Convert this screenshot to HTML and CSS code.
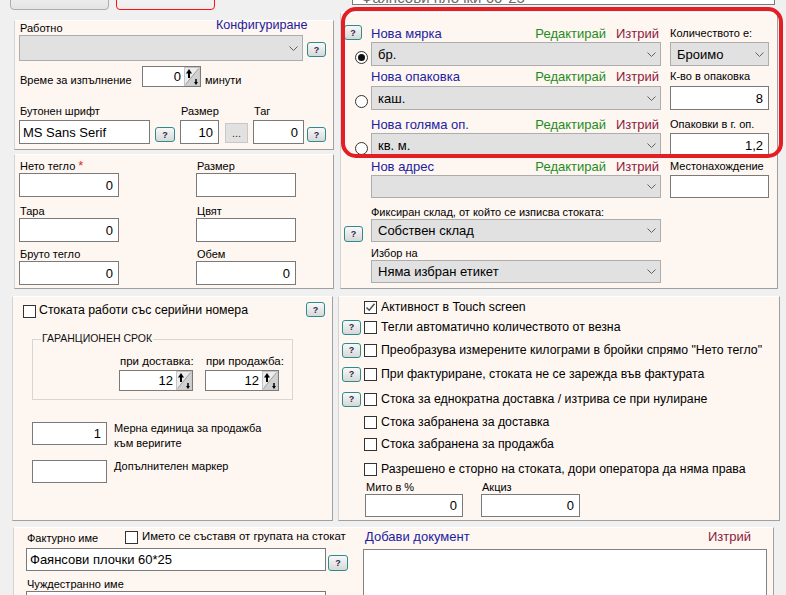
FILE: index.html
```html
<!DOCTYPE html>
<html>
<head>
<meta charset="utf-8">
<link rel="stylesheet" href="styles.css">
</head>
<body>
<div class="page">
  <div class="cols">
    <div class="colL">
      <div class="tabs"><div class="tab"></div><div class="tab tab-red"></div></div>

      <div class="panel p1">
        <div class="p1-r1"><span class="lbl lw197">Работно</span><span class="cfg">Конфигуриране</span></div>
        <div class="p1-r2"><div class="select w284"><span></span><svg class="chev" width="9" height="5" viewBox="0 0 9 5"><path d="M0.5 0.5 L4.5 4.5 L8.5 0.5" fill="none" stroke="#606060"/></svg></div><div class="qbtn">?</div></div>
        <div class="p1-r3">
          <span class="l12 lw123">Време за изпълнение</span>
          <div class="spin w59"><span class="val">0</span><svg width="16" height="19" viewBox="0 0 16 19"><rect x="0.5" y="0.5" width="15" height="18" fill="#ececec" stroke="#c4c4c4"/><path d="M15.5 1 L15.5 18.5 L1 18.5 Z" fill="#d0d0d0"/><path d="M1.5 17.5 L14.5 1.5" stroke="#9a9a9a"/><path d="M5 11 V4" stroke="#000" stroke-width="2"/><path d="M2 6.5 L5 2 L8 6.5 Z" fill="#000"/><path d="M12 12 V16" stroke="#000" stroke-width="1.5"/><path d="M10 15 L12 18 L14 15 Z" fill="#000"/></svg></div>
          <span class="l12 ml4">минути</span>
        </div>
        <div class="p1-r4">
          <div class="field"><span class="lbl">Бутонен шрифт</span><div class="input left w131 fs13">MS Sans Serif</div></div>
          <div class="qbtn q20 ml5 mb2">?</div>
          <div class="field ml5"><span class="lbl">Размер</span><div class="input w39">10</div></div>
          <div class="dots">...</div>
          <div class="field ml5"><span class="lbl">Таг</span><div class="input w51">0</div></div>
          <div class="qbtn ml3 mb2">?</div>
        </div>
      </div>

      <div class="panel p2">
        <div class="p2-row">
          <div class="field w100"><span class="lbl">Нето тегло <span class="req">*</span></span><div class="input">0</div></div>
          <div class="field w100 col2"><span class="lbl">Размер</span><div class="input"></div></div>
        </div>
        <div class="p2-row mt8">
          <div class="field w100"><span class="lbl">Тара</span><div class="input">0</div></div>
          <div class="field w100 col2"><span class="lbl">Цвят</span><div class="input"></div></div>
        </div>
        <div class="p2-row mt6">
          <div class="field w100"><span class="lbl">Бруто тегло</span><div class="input">0</div></div>
          <div class="field w100 col2"><span class="lbl">Обем</span><div class="input">0</div></div>
        </div>
      </div>

      <div class="panel p3">
        <div class="p3-r1">
          <div class="cb ml10 mt3"></div>
          <span class="t125 ml3">Стоката работи със серийни номера</span>
          <div class="qbtn push">?</div>
        </div>
        <div class="group">
          <span class="legend">ГАРАНЦИОНЕН СРОК</span>
          <div class="g-row">
            <div class="field w74 gf1"><span class="lbl l115">при доставка:</span><div class="spin h21"><span class="val">12</span><svg width="16" height="19" viewBox="0 0 16 19"><rect x="0.5" y="0.5" width="15" height="18" fill="#ececec" stroke="#c4c4c4"/><path d="M15.5 1 L15.5 18.5 L1 18.5 Z" fill="#d0d0d0"/><path d="M1.5 17.5 L14.5 1.5" stroke="#9a9a9a"/><path d="M5 11 V4" stroke="#000" stroke-width="2"/><path d="M2 6.5 L5 2 L8 6.5 Z" fill="#000"/><path d="M12 12 V16" stroke="#000" stroke-width="1.5"/><path d="M10 15 L12 18 L14 15 Z" fill="#000"/></svg></div></div>
            <div class="field w74 ml12"><span class="lbl l115">при продажба:</span><div class="spin h21"><span class="val">12</span><svg width="16" height="19" viewBox="0 0 16 19"><rect x="0.5" y="0.5" width="15" height="18" fill="#ececec" stroke="#c4c4c4"/><path d="M15.5 1 L15.5 18.5 L1 18.5 Z" fill="#d0d0d0"/><path d="M1.5 17.5 L14.5 1.5" stroke="#9a9a9a"/><path d="M5 11 V4" stroke="#000" stroke-width="2"/><path d="M2 6.5 L5 2 L8 6.5 Z" fill="#000"/><path d="M12 12 V16" stroke="#000" stroke-width="1.5"/><path d="M10 15 L12 18 L14 15 Z" fill="#000"/></svg></div></div>
          </div>
        </div>
        <div class="p3-row mt22">
          <div class="input w75 h23">1</div>
          <span class="side-lbl">Мерна единица за продажба<br>към веригите</span>
        </div>
        <div class="p3-row mt15">
          <div class="input w75 h23"></div>
          <span class="side-lbl">Допълнителен маркер</span>
        </div>
      </div>
    </div>

    <div class="colR">
      <div class="topinput">Фаянсови плочки 60*25</div>

      <div class="panel rp1">
        <div class="ub">
          <div class="ua between"><div class="qbtn q18 qa">?</div><div class="radio on"></div></div>
          <div class="ubb">
            <div class="ul h15"><span class="blue">Нова мярка</span><span class="green">Редактирай</span><span class="red">Изтрий</span></div>
            <div class="select h24"><span>бр.</span><svg width="9" height="5" viewBox="0 0 9 5"><path d="M0.5 0.5 L4.5 4.5 L8.5 0.5" fill="none" stroke="#606060"/></svg></div>
          </div>
          <div class="uc">
            <div class="ul h15"><span class="sl">Количеството е:</span></div>
            <div class="select h24"><span>Броимо</span><svg width="9" height="5" viewBox="0 0 9 5"><path d="M0.5 0.5 L4.5 4.5 L8.5 0.5" fill="none" stroke="#606060"/></svg></div>
          </div>
        </div>
        <div class="ub">
          <div class="ua end"><div class="radio"></div></div>
          <div class="ubb">
            <div class="ul h20"><span class="blue">Нова опаковка</span><span class="green">Редактирай</span><span class="red">Изтрий</span></div>
            <div class="select h24"><span>каш.</span><svg width="9" height="5" viewBox="0 0 9 5"><path d="M0.5 0.5 L4.5 4.5 L8.5 0.5" fill="none" stroke="#606060"/></svg></div>
          </div>
          <div class="uc">
            <div class="ul h20"><span class="sl">К-во в опаковка</span></div>
            <div class="input h24">8</div>
          </div>
        </div>
        <div class="ub">
          <div class="ua end"><div class="radio"></div></div>
          <div class="ubb">
            <div class="ul h23"><span class="blue">Нова голяма оп.</span><span class="green">Редактирай</span><span class="red">Изтрий</span></div>
            <div class="select h24"><span>кв. м.</span><svg width="9" height="5" viewBox="0 0 9 5"><path d="M0.5 0.5 L4.5 4.5 L8.5 0.5" fill="none" stroke="#606060"/></svg></div>
          </div>
          <div class="uc">
            <div class="ul h23"><span class="sl">Опаковки в г. оп.</span></div>
            <div class="input h24">1,2</div>
          </div>
        </div>
        <div class="ub">
          <div class="ua"></div>
          <div class="ubb">
            <div class="ul h18"><span class="blue">Нов адрес</span><span class="green">Редактирай</span><span class="red">Изтрий</span></div>
            <div class="select h23"><span></span><svg width="9" height="5" viewBox="0 0 9 5"><path d="M0.5 0.5 L4.5 4.5 L8.5 0.5" fill="none" stroke="#606060"/></svg></div>
          </div>
          <div class="uc">
            <div class="ul h18"><span class="sl">Местонахождение</span></div>
            <div class="input h23"></div>
          </div>
        </div>
        <div class="ub">
          <div class="ua end"><div class="qbtn q16 qa">?</div></div>
          <div class="ubb">
            <div class="ul h21"><span class="sl">Фиксиран склад, от който се изписва стоката:</span></div>
            <div class="select h23"><span>Собствен склад</span><svg width="9" height="5" viewBox="0 0 9 5"><path d="M0.5 0.5 L4.5 4.5 L8.5 0.5" fill="none" stroke="#606060"/></svg></div>
          </div>
        </div>
        <div class="ub">
          <div class="ua"></div>
          <div class="ubb">
            <div class="ul h18b"><span class="sl">Избор на</span></div>
            <div class="select h23"><span>Няма избран етикет</span><svg width="9" height="5" viewBox="0 0 9 5"><path d="M0.5 0.5 L4.5 4.5 L8.5 0.5" fill="none" stroke="#606060"/></svg></div>
          </div>
        </div>
      </div>

      <div class="panel rp2">
        <div class="cr r1"><div class="qslot"></div><div class="cb"><svg width="11" height="11" viewBox="0 0 11 11"><path d="M1.5 5.5 L4.2 8.3 L9.5 1.8" fill="none" stroke="#4a4a4a" stroke-width="1.4"/></svg></div><span class="crt">Активност в Touch screen</span></div>
        <div class="cr r2"><div class="qslot"><div class="qbtn">?</div></div><div class="cb"></div><span class="crt">Тегли автоматично количеството от везна</span></div>
        <div class="cr r3"><div class="qslot"><div class="qbtn">?</div></div><div class="cb"></div><span class="crt">Преобразува измерените килограми в бройки спрямо "Нето тегло"</span></div>
        <div class="cr r4"><div class="qslot"><div class="qbtn">?</div></div><div class="cb"></div><span class="crt">При фактуриране, стоката не се зарежда във фактурата</span></div>
        <div class="cr r5"><div class="qslot"><div class="qbtn">?</div></div><div class="cb"></div><span class="crt">Стока за еднократна доставка / изтрива се при нулиране</span></div>
        <div class="cr r6"><div class="qslot"></div><div class="cb"></div><span class="crt">Стока забранена за доставка</span></div>
        <div class="cr r7"><div class="qslot"></div><div class="cb"></div><span class="crt">Стока забранена за продажба</span></div>
        <div class="cr r8"><div class="qslot"></div><div class="cb"></div><span class="crt">Разрешено е сторно на стоката, дори оператора да няма права</span></div>
        <div class="duty">
          <div class="field w98"><span class="lbl">Мито в %</span><div class="input h23">0</div></div>
          <div class="field w99 ml18"><span class="lbl">Акциз</span><div class="input h23">0</div></div>
        </div>
      </div>
    </div>
  </div>

  <div class="panel bp">
    <div class="bpL">
      <div class="bp-r1">
        <span class="lbl bl1">Фактурно име</span>
        <div class="cb mt3"></div>
        <span class="bchk">Името се съставя от групата на стокат</span>
      </div>
      <div class="bp-r2">
        <div class="input left w300 h23 fs13">Фаянсови плочки 60*25</div>
        <div class="qbtn q20 q16b">?</div>
      </div>
      <div class="lbl bl3">Чуждестранно име</div>
      <div class="input w300 h23"></div>
    </div>
    <div class="bpR">
      <div class="bpr-head"><span class="blue">Добави документ</span><span class="red">Изтрий</span></div>
      <div class="docs"></div>
    </div>
  </div>

  <div class="annot"></div>
</div>
</body>
</html>
```

FILE: styles.css
```css
* { box-sizing: border-box; }
html, body { margin: 0; padding: 0; }
body {
  width: 786px;
  height: 595px;
  overflow: hidden;
  background: #f0f0f0;
  font-family: "Liberation Sans", Arial, sans-serif;
  font-size: 11px;
  color: #000;
}
.page { position: relative; display: flex; flex-direction: column; height: 595px; }

.cols { display: flex; padding-left: 12px; gap: 5px; }
.colL { width: 321px; display: flex; flex-direction: column; }
.colR { width: 442px; display: flex; flex-direction: column; }

.panel {
  background: #fdf6f1;
  border: 1px solid;
  border-color: #ffffff #a0a0a0 #a0a0a0 #d4d4d4;
}

/* tabs */
.tabs { height: 10px; display: flex; gap: 7px; margin-left: -2px; }
.tab {
  width: 99px; height: 20px; margin-top: -10px;
  border: 1px solid #adadad; border-radius: 4px;
  background: linear-gradient(#f4f4f4, #e4e4e4);
}
.tab-red { border-color: #ff1010; background: linear-gradient(#f6f6f6, #eeeeee); }

/* generic */
.lbl { font-size: 11px; line-height: 13px; white-space: nowrap; }
.l12 { font-size: 11px; line-height: 13px; white-space: nowrap; }
.l115 { font-size: 11.5px; }
.fs13 { font-size: 13px; }
.ml3 { margin-left: 3px; }
.ml4 { margin-left: 4px; }
.ml5 { margin-left: 5px; }
.ml10 { margin-left: 10px; }
.ml12 { margin-left: 12px; }
.ml18 { margin-left: 18px; }
.mb2 { margin-bottom: 2px; }
.mt3 { margin-top: 3px; }
.mt6 { margin-top: 6px; }
.mt8 { margin-top: 8px; }
.mt15 { margin-top: 15px; }
.mt22 { margin-top: 22px; }
.lw197 { width: 197px; }
.lw123 { width: 123px; }
.w39 { width: 39px; }
.w51 { width: 51px; }
.w59 { width: 59px; }
.w74 { width: 74px; }
.w75 { width: 75px; }
.w98 { width: 98px; }
.w99 { width: 99px; }
.w100 { width: 100px; }
.w131 { width: 131px; }
.w284 { width: 284px; }
.w300 { width: 300px; }
.h21 { height: 21px; }

.select {
  display: flex; align-items: center; justify-content: space-between;
  background: #e1e1e1; border: 1px solid #adadad;
  padding: 0 4px 0 6px; font-size: 13px; white-space: nowrap;
}
.select svg { flex: none; }
.select.w284 { height: 26px; }
.select.h24, .input.h24 { height: 24px; }
.select.h23, .input.h23 { height: 23px; }

.input {
  height: 24px; background: #fff; border: 1px solid #7a7a7a;
  display: flex; align-items: center; justify-content: flex-end;
  padding: 0 5px; font-size: 13px; white-space: nowrap; overflow: hidden;
}
.input.left { justify-content: flex-start; padding-left: 3px; }

.spin {
  height: 21px; background: #fff; border: 1px solid #7a7a7a;
  display: flex; align-items: center; justify-content: flex-end;
  font-size: 13px; padding-right: 0;
}
.spin .val { padding-right: 3px; }
.spin svg { flex: none; }

.qbtn {
  width: 19px; height: 15px; flex: none;
  border: 1px solid #2a8c8c; border-radius: 3px;
  background: linear-gradient(#f8f8f8, #d8d8d8);
  font-size: 9px; color: #2a2a50; font-weight: bold;
  display: flex; align-items: center; justify-content: center;
}
.q20 { width: 20px; }
.q18 { width: 18px; }
.q16 { height: 16px; }

.dots {
  width: 23px; height: 20px; margin: 0 0 1px 6px;
  background: #e1e1e1; border: 1px solid #c8c8c8;
  font-size: 11px; color: #333; display: flex; align-items: center; justify-content: center;
}

.field { display: flex; flex-direction: column; }
.field > .lbl { margin-bottom: 2px; padding-left: 1px; }

.cb { width: 13px; height: 13px; flex: none; border: 1px solid #333; background: #fff; display: flex; align-items: center; justify-content: center; }
.radio { width: 13px; height: 13px; flex: none; border: 1px solid #333; border-radius: 50%; background: #fff; display: flex; align-items: center; justify-content: center; }
.radio.on::after { content: ""; width: 7px; height: 7px; border-radius: 50%; background: #111; }

.blue { color: #2222a0; font-size: 13px; }
.green { color: #1e8c1e; font-size: 13px; }
.red { color: #8c1a40; font-size: 13px; }

/* panel 1 */
.p1 { margin: 10px 0 0 2px; width: 320px; height: 130px; padding-left: 4px; }
.p1-r1 { display: flex; height: 14px; }
.p1-r1 .lbl { line-height: 14px; padding-left: 1px; }
.cfg { font-size: 12.6px; line-height: 14px; margin-top: -3px; color: #26209a; }
.p1-r2 { display: flex; align-items: flex-end; }
.p1-r2 .qbtn { margin: 0 0 4px 4px; }
.p1-r3 { display: flex; align-items: flex-end; margin-top: 5px; }
.p1-r3 .lw123 { padding-left: 1px; }
.p1-r4 { display: flex; align-items: flex-end; margin-top: 18px; }

/* panel 2 */
.p2 { margin: 4px 0 0 2px; width: 320px; height: 135px; padding: 5px 0 0 4px; }
.p2-row { display: flex; }
.p2-row .field > .lbl { margin-bottom: 0; }
.col2 { margin-left: 77px; }
.req { color: #e8282a; font-size: 13px; vertical-align: top; line-height: 11px; }

/* panel 3 */
.p3 { margin-top: 7px; width: 321px; height: 225px; }
.p3-r1 { display: flex; align-items: flex-start; height: 16px; margin-top: 5px; }
.t125 { font-size: 12.3px; line-height: 16px; white-space: nowrap; }
.push { margin-left: auto; margin-right: 7px; }
.group {
  margin: 21px 0 0 19px; width: 261px;
  border: 1px solid #d6d6d6; padding-bottom: 8px;
}
.legend {
  display: block; width: fit-content; margin: -8px 0 0 8px;
  padding: 0 1px; background: #fdf6f1; font-size: 10.5px; line-height: 12px; color: #111;
}
.g-row { display: flex; margin-top: 11px; }
.gf1 { margin-left: 86px; }
.p3-row { display: flex; align-items: flex-start; margin-left: 19px; height: 23px; }
.side-lbl { margin: -1px 0 0 7px; font-size: 11px; line-height: 15px; }

/* right column */
.topinput {
  margin: -19px 0 0 14px; width: 423px; height: 24px;
  border: 1px solid #7a7a7a; background: #fff;
  font-size: 15px; color: #6a6a6a; line-height: 22px;
  padding: 5px 0 0 8px; overflow: hidden; white-space: nowrap;
}
.rp1 { margin: 7px 0 0 2px; width: 438px; height: 277px; padding-top: 14px; }
.ub { display: flex; }
.ua { width: 30px; flex: none; display: flex; flex-direction: column; }
.ua.between { justify-content: space-between; }
.ua.end { justify-content: flex-end; }
.ua .radio { margin: 0 0 2px 14px; }
.ua .qa { margin-left: 3px; }
.ua.between .qa { margin-top: -2px; }
.ubb { width: 290px; flex: none; }
.uc { width: 99px; flex: none; margin-left: 9px; }
.ul { display: flex; align-items: flex-start; line-height: 13px; white-space: nowrap; }
.ul .green { margin-left: auto; }
.ul .red { margin: 0 2px 0 10px; }
.ul.h15 { height: 15px; }
.ul.h20 { height: 20px; padding-top: 4px; }
.ul.h23 { height: 23px; padding-top: 8px; }
.ul.h18 { height: 18px; padding-top: 3px; }
.ul.h21 { height: 21px; padding-top: 8px; }
.ul.h18b { height: 18px; padding-top: 5px; }
.sl { font-size: 11px; }

.rp2 { margin-top: 7px; width: 442px; height: 225px; }
.cr { display: flex; align-items: center; }
.cr.r1 { height: 20px; }
.cr.r2 { height: 20px; }
.cr.r3 { height: 26px; }
.cr.r4 { height: 22px; }
.cr.r5 { height: 28px; }
.cr.r6 { height: 18px; }
.cr.r7 { height: 26px; }
.cr.r8 { height: 24px; }
.qslot { width: 25px; flex: none; padding-left: 3px; display: flex; }
.crt { margin-left: 4px; font-size: 12.3px; white-space: nowrap; }
.duty { display: flex; margin-left: 26px; }
.duty .field > .lbl { margin-bottom: 0; }

/* bottom panel */
.bp { margin: 6px 0 0 13px; width: 761px; height: 80px; display: flex; padding-left: 12px; flex: none; }
.bpL { width: 322px; flex: none; }
.bp-r1 { display: flex; align-items: flex-start; height: 20px; }
.bl1 { width: 99px; margin-top: 4px; padding-left: 1px; }
.bchk { margin: 1px 0 0 4px; white-space: nowrap; font-size: 11.4px; line-height: 14px; }
.bp-r2 { display: flex; align-items: flex-end; }
.q16b { height: 16px; margin-left: 2px; }
.bl3 { margin-top: 7px; padding-left: 1px; }
.bpR { width: 404px; margin-left: 15px; flex: none; }
.bpr-head { display: flex; justify-content: space-between; height: 21px; padding: 2px 16px 0 2px; line-height: 14px; }
.docs { height: 60px; background: #fff; border: 1px solid #828282; }

/* red annotation outline over the units block */
.annot {
  position: absolute; left: 341px; top: 7px; width: 442px; height: 151px;
  border: 4px solid #e31e24; border-radius: 15px; pointer-events: none;
}
```
